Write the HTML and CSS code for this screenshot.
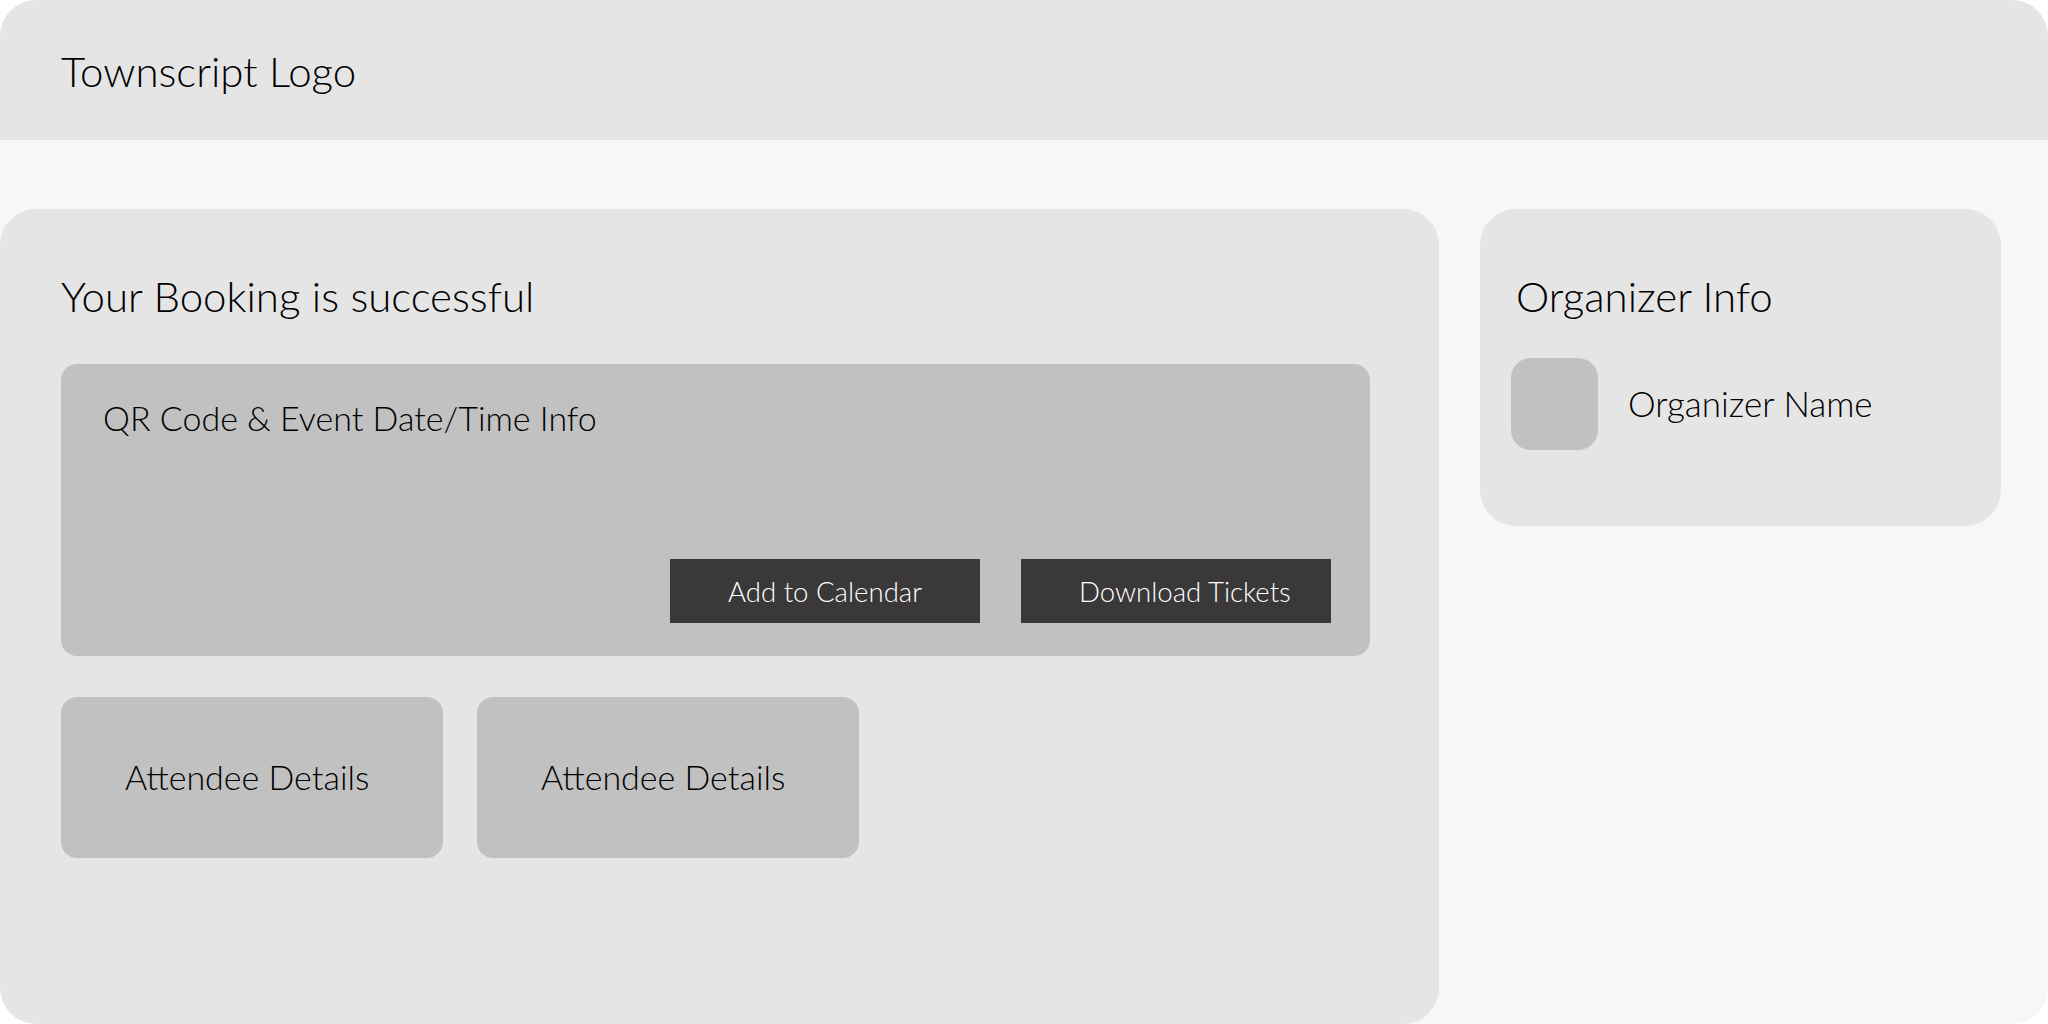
FILE: index.html
```html
<!DOCTYPE html>
<html lang="en">
<head>
<meta charset="utf-8">
<title>Booking Successful</title>
<link rel="stylesheet" href="styles.css">
</head>
<body>
<div class="page">
  <header class="header">
    <div class="logo">Townscript Logo</div>
  </header>
  <div class="content">
    <section class="main-card">
      <h1 class="card-title">Your Booking is successful</h1>
      <div class="qr-box">
        <div class="qr-title">QR Code &amp; Event Date/Time Info</div>
        <div class="actions">
          <button class="btn">Add to Calendar</button>
          <button class="btn">Download Tickets</button>
        </div>
      </div>
      <div class="attendees">
        <div class="attendee">Attendee Details</div>
        <div class="attendee">Attendee Details</div>
      </div>
    </section>
    <aside class="side-card">
      <h2 class="card-title side-title">Organizer Info</h2>
      <div class="organizer">
        <div class="avatar"></div>
        <div class="org-name">Organizer Name</div>
      </div>
    </aside>
  </div>
</div>
</body>
</html>
```
FILE: styles.css
```css
* { box-sizing: border-box; }
html, body { margin: 0; padding: 0; background: #ffffff; }
body {
  font-family: "Lato", "Noto Sans", sans-serif;
  font-weight: 300;
  color: #000000;
}
.page {
  width: 2048px;
  height: 1024px;
  border-radius: 36px;
  overflow: hidden;
  background: #f7f7f7;
  display: flex;
  flex-direction: column;
}
.header {
  height: 140px;
  flex: none;
  background: #e5e5e5;
  display: flex;
  align-items: center;
  padding-left: 61px;
}
.logo {
  font-size: 42px;
  line-height: 48px;
  margin-top: 2px;
}
.content {
  flex: 1;
  display: flex;
  align-items: flex-start;
  gap: 41px;
  padding-top: 69px;
}
.main-card {
  width: 1439px;
  height: 815px;
  flex: none;
  background: #e5e5e5;
  border-radius: 36px;
  padding: 63px 69px 0 61px;
}
.card-title {
  margin: 0;
  font-size: 42px;
  line-height: 48px;
  font-weight: 300;
}
.qr-box {
  margin-top: 44px;
  height: 292px;
  background: #c1c1c1;
  border-radius: 16px;
  padding: 35px 39px 33px 42px;
  display: flex;
  flex-direction: column;
  justify-content: space-between;
}
.qr-title {
  font-size: 34px;
  line-height: 38px;
}
.actions {
  display: flex;
  justify-content: flex-end;
  gap: 41px;
}
.btn {
  width: 310px;
  height: 64px;
  border: none;
  border-radius: 0;
  background: #3a3839;
  color: #ffffff;
  font-family: inherit;
  font-weight: 300;
  font-size: 27.6px;
  text-align: left;
  padding: 0 0 0 58px;
}
.attendees {
  margin-top: 41px;
  display: flex;
  gap: 34px;
}
.attendee {
  width: 382px;
  height: 161px;
  background: #c1c1c1;
  border-radius: 16px;
  display: flex;
  align-items: center;
  padding-left: 64px;
  padding-bottom: 2px;
  font-size: 34px;
}
.side-card {
  width: 521px;
  height: 317px;
  flex: none;
  background: #e5e5e5;
  border-radius: 36px;
  padding: 63px 0 0 36px;
}
.organizer {
  margin-top: 38px;
  display: flex;
  align-items: center;
  gap: 30px;
  margin-left: -5px;
}
.avatar {
  width: 87px;
  height: 92px;
  background: #c1c1c1;
  border-radius: 20px;
}
.org-name {
  font-size: 35px;
  margin-top: -2px;
}
```
